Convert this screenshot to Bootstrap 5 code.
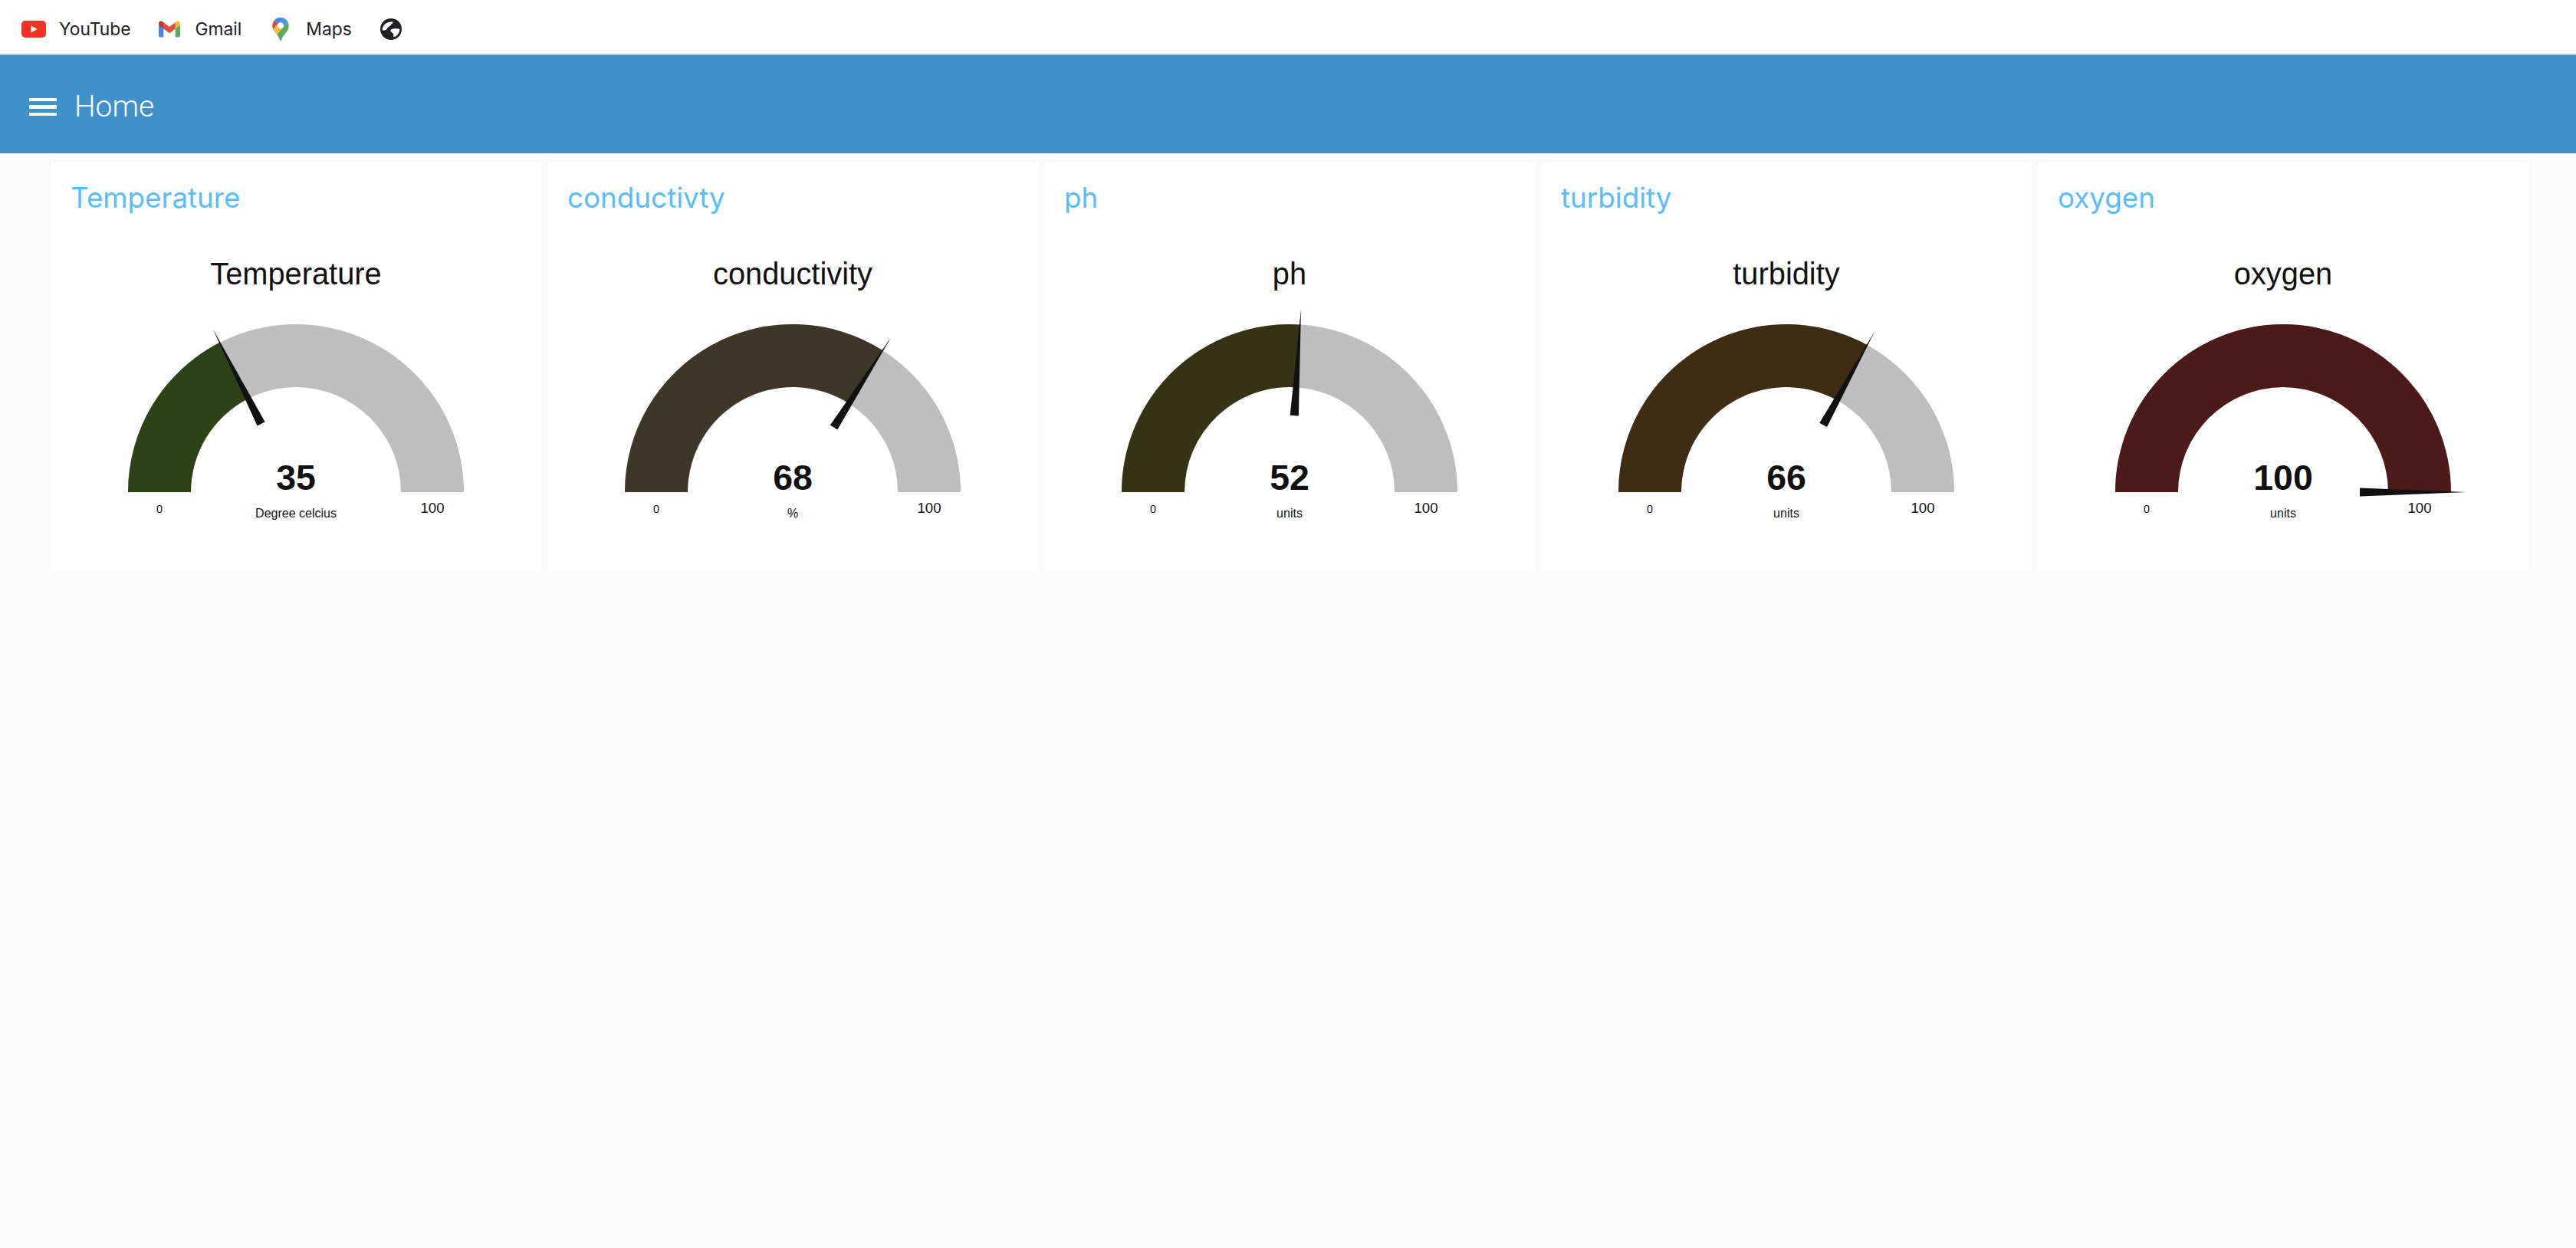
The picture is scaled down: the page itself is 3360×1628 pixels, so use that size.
<!DOCTYPE html>
<html lang="en">

<head>
    <meta charset="UTF-8">
    <title>Home</title>
    <meta name="viewport" content="width=device-width, initial-scale=1">
    <link href="https://cdn.jsdelivr.net/npm/bootstrap@5.3.3/dist/css/bootstrap.min.css" rel="stylesheet">
    <style>
        body {
            background: #fafafa;
            font-family: "Liberation Sans", Arial, sans-serif;
        }

        .bookmarks {
            height: 72px;
            padding: 6px 0 0 28px;
            gap: 35px;
            background: #fff;
            border-bottom: 2px solid #c4c7c8;
        }

        .bookmark {
            gap: 17px;
            font-family: Inter, "Liberation Sans", sans-serif;
            font-size: 22.8px;
            color: #202124;
            text-decoration: none;
        }

        .bookmark-icon {
            width: 32px;
            height: 32px;
            flex: none;
        }

        .appbar {
            height: 128px;
            padding: 7px 0 0 38px;
            gap: 23px;
            background: #4191c9;
            color: #fff;
        }

        .appbar-title {
            font-family: Roboto, "Liberation Sans", sans-serif;
            font-size: 39px;
            font-weight: 300;
        }

        .burger {
            width: 36px;
            height: 24px;
            background: none;
            border: 0;
            padding: 0;
            gap: 5.5px;
        }

        .burger span {
            height: 4.5px;
            background: #fff;
        }

        .gauge-row {
            padding: 12px 62px 0 66px;
        }

        .gauge-card {
            height: 532px;
            flex: 1 1 0;
            min-width: 0;
            border: 0;
            border-radius: 0;
        }

        .gauge-name {
            margin: 23px 0 0 26px;
            font-family: Inter, "Liberation Sans", sans-serif;
            font-size: 36.8px;
            line-height: 45px;
            font-weight: 400;
            color: #5bbcfd;
        }

        .gauge-card svg {
            display: block;
            width: 640px;
            height: 464px;
            font-family: "Liberation Sans", Arial, sans-serif;
            fill: #111;
        }

        .g-title { font-size: 39.8px; }
        .g-value { font-size: 46.5px; font-weight: 700; }
        .g-unit { font-size: 16px; }
        .g-min { font-size: 14.4px; }
        .g-max { font-size: 18.7px; }
    </style>
</head>

<body>

    <!-- Bookmarks bar -->
    <div class="bookmarks d-flex align-items-center">
        <a class="bookmark d-flex align-items-center" href="#">
            <svg class="bookmark-icon" viewBox="0 0 32 32">
                <rect x="0" y="5" width="32" height="22" rx="5" fill="#ef3324"/>
                <path d="M12.5 11.5v9l8-4.5z" fill="#fff"/>
            </svg>
            YouTube
        </a>
        <a class="bookmark d-flex align-items-center" href="#">
            <svg class="bookmark-icon" viewBox="-18 -18 292 229">
                <path fill="#4285f4" d="M58.182 192.05V93.14L27.507 65.077 0 49.504v125.091c0 9.658 7.825 17.455 17.455 17.455h40.727Z"/>
                <path fill="#5aa95f" d="M197.818 192.05h40.727c9.659 0 17.455-7.826 17.455-17.455V49.505l-31.156 17.837-27.026 25.798v98.91Z"/>
                <path fill="#dc4f3f" d="m58.182 93.14-4.174-38.647 4.174-36.989L128 69.868l69.818-52.364 4.669 34.992-4.669 40.644L128 145.504z"/>
                <path fill="#f6bd3c" d="M197.818 17.504V93.14L256 49.504V26.231c0-21.585-24.64-33.89-41.89-20.945l-16.292 12.218Z"/>
                <path fill="#c0392b" d="m0 49.504 26.759 20.07L58.182 93.14V17.504L41.89 5.286C24.61-7.66 0 4.646 0 26.23v23.273Z"/>
            </svg>
            Gmail
        </a>
        <a class="bookmark d-flex align-items-center" href="#">
            <svg class="bookmark-icon" viewBox="-23 0 138.3 132.3">
                <path fill="#4285f4" d="M60.2 2.2C55.8.8 51 0 46.1 0 32 0 19.3 6.4 10.8 16.5l21.8 18.3L60.2 2.2z"/>
                <path fill="#dc4f3f" d="M10.8 16.5C4.1 24.5 0 34.9 0 46.1c0 8.7 1.7 15.7 4.6 22l28-33.3-21.8-18.3z"/>
                <path fill="#4d8fef" d="M46.2 28.5c9.8 0 17.7 7.9 17.7 17.7 0 4.3-1.6 8.3-4.2 11.4 0 0 13.9-16.6 27.5-32.7-5.6-10.8-15.3-19-27-22.7L32.6 34.8c3.3-3.8 8.1-6.3 13.6-6.3"/>
                <path fill="#f6bd3c" d="M46.2 63.8c-9.8 0-17.7-7.9-17.7-17.7 0-4.3 1.5-8.3 4.1-11.3l-28 33.3c4.8 10.6 12.8 19.2 21 29.9l34.1-40.5c-3.3 3.9-8.1 6.3-13.5 6.3"/>
                <path fill="#5aa95f" d="M59.1 109.2c15.4-24.1 33.3-35 33.3-63 0-7.7-1.9-14.9-5.2-21.3L25.6 98c2.6 3.4 5.3 7.3 7.9 11.3 9.4 14.5 6.8 23.1 12.8 23.1s3.4-8.7 12.8-23.2"/>
            </svg>
            Maps
        </a>
        <a class="bookmark d-flex align-items-center" href="#">
            <svg class="bookmark-icon" viewBox="-2 -2 32 32">
                <circle cx="14" cy="14" r="14" fill="#202124"/>
                <path fill="#fff" d="M2.6 15.2C2.8 10.6 5.6 6.8 10 5.2c2-.7 4.6-1 7-.4-.8 1-1.4 2.4-3 3.3-.6 1.8-2.2 2.2-3.6 3.2-1.2 1-1.4 2.8-3 3.6-1.5.7-3.200.8-4.800.3z"/>
                <path fill="#fff" d="M14 14.800c3-1.700 6.500-1.900 11.300-1 .2 3.800-1.800 7.300-5 9.600-1.300.5-2.700.6-3.300 0 .3-1.700.5-2.700-.5-3.800-1-1-2.200-1.400-2.900-2.600-.4-.8-.3-1.600.4-2.200z"/>
            </svg>
        </a>
    </div>

    <!-- App bar -->
    <header class="appbar d-flex align-items-center">
        <button class="burger d-flex flex-column" type="button" aria-label="Menu">
            <span class="w-100"></span><span class="w-100"></span><span class="w-100"></span>
        </button>
        <span class="appbar-title">Home</span>
    </header>

    <!-- Gauges -->
    <main id="gauges" class="gauge-row d-flex gap-2"></main>

    <script src="https://cdn.jsdelivr.net/npm/bootstrap@5.3.3/dist/js/bootstrap.bundle.min.js"></script>
    <script>
        const gauges = [
            { name: 'Temperature', title: 'Temperature', value: 35, unit: 'Degree celcius', color: '#2e4218' },
            { name: 'conductivty', title: 'conductivity', value: 68, unit: '%', color: '#3e3626' },
            { name: 'ph', title: 'ph', value: 52, unit: 'units', color: '#353216' },
            { name: 'turbidity', title: 'turbidity', value: 66, unit: 'units', color: '#3e2c14' },
            { name: 'oxygen', title: 'oxygen', value: 100, unit: 'units', color: '#4c1a19' },
        ];

        // same numbers for every gauge, centre is at 320,362 in the svg
        const cx = 320, cy = 362, outer = 219, inner = 137;

        function pt(r, angle) {
            return `${(cx + r * Math.cos(angle)).toFixed(2)} ${(cy - r * Math.sin(angle)).toFixed(2)}`;
        }

        function arc(value) {
            const a = Math.PI * (1 - value / 100);
            return `M${pt(outer, Math.PI)} A${outer} ${outer} 0 0 1 ${pt(outer, a)} L${pt(inner, a)} A${inner} ${inner} 0 0 0 ${pt(inner, Math.PI)} Z`;
        }

        function needle(value) {
            const a = Math.PI * (1 - value / 100);
            const dx = 5.6 * Math.sin(a), dy = 5.6 * Math.cos(a);
            const bx = cx + 100 * Math.cos(a), by = cy - 100 * Math.sin(a);
            return `M${bx + dx} ${by + dy} L${bx - dx} ${by - dy} L${pt(239, a)} Z`;
        }

        document.getElementById('gauges').innerHTML = gauges.map((g) => `
            <div class="card gauge-card">
                <h5 class="gauge-name">${g.name}</h5>
                <svg viewBox="0 0 640 464">
                    <text class="g-title" x="320" y="91" text-anchor="middle">${g.title}</text>
                    <path d="${arc(100)}" style="fill:#bebebe"></path>
                    <path d="${arc(g.value)}" style="fill:${g.color}"></path>
                    <path d="${needle(g.value)}"></path>
                    <text class="g-value" x="320" y="359" text-anchor="middle">${g.value}</text>
                    <text class="g-min" x="142" y="389" text-anchor="middle">0</text>
                    <text class="g-max" x="498" y="389" text-anchor="middle">100</text>
                    <text class="g-unit" x="320" y="395" text-anchor="middle">${g.unit}</text>
                </svg>
            </div>`).join('');
    </script>
</body>

</html>
